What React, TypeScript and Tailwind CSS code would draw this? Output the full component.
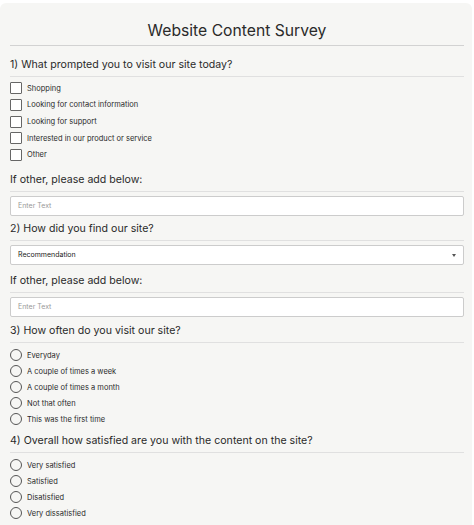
import React from 'react'

const font = {fontFamily: 'Inter, "Noto Sans", sans-serif'}

const Checkbox = ({label}: {label: string}) => (
    <div className="flex items-center h-[16.7px] gap-[5px]">
        <div className="w-[12px] h-[12px] border border-[#666] rounded-[1px] bg-white"></div>
        <span className="text-[7.5px] text-[#2a2a2a]">{label}</span>
    </div>
)

const Radio = ({label}: {label: string}) => (
    <div className="flex items-center h-[16px] gap-[5px]">
        <div className="w-[12px] h-[12px] border border-[#555] rounded-full"></div>
        <span className="text-[7.5px] text-[#2a2a2a]">{label}</span>
    </div>
)

const Heading = ({children, tight}: {children: React.ReactNode, tight?: boolean}) => (
    <div className={tight ? 'border-b border-[#e0e0e0] pb-[3px] mb-[3px]' : 'border-b border-[#e0e0e0] pb-[3px] mb-[4px]'}>
        <h2 className="text-[10.6px] leading-[16px] text-[#2a2a2a]">{children}</h2>
    </div>
)

const TextInput = () => (
    <div className="h-[20px] bg-white border border-[#ccc] rounded-[2px] flex items-center px-[7px]">
        <span className="text-[7px] text-[#999]">Enter Text</span>
    </div>
)

export default function App(): React.JSX.Element {
    return (
        <main className="w-[474px] h-[525px] bg-white pt-[3px] overflow-hidden" style={font}>
            <div className="w-[472px] h-[530px] bg-[#f6f6f4] rounded-[6px] pl-[10px] pr-[8px] pt-[17px]">
                <div className="border-b border-[#d2d2d2] pb-[3px]">
                    <h1 className="text-center text-[15.7px] leading-[22px] text-[#2a2a2a]">Website Content Survey</h1>
                </div>

                <div className="mt-[11px]">
                    <Heading tight>1) What prompted you to visit our site today?</Heading>
                    <Checkbox label="Shopping"/>
                    <Checkbox label="Looking for contact information"/>
                    <Checkbox label="Looking for support"/>
                    <Checkbox label="Interested in our product or service"/>
                    <Checkbox label="Other"/>
                </div>

                <div className="mt-[9px]">
                    <Heading>If other, please add below:</Heading>
                    <TextInput/>
                </div>

                <div className="mt-[5px]">
                    <Heading>2) How did you find our site?</Heading>
                    <div className="h-[20px] bg-white border border-[#ccc] rounded-[2px] flex items-center justify-between px-[7px] mt-[3px]">
                        <span className="text-[7px] text-[#222]">Recommendation</span>
                        <span className="w-0 h-0 border-l-[2.5px] border-r-[2.5px] border-t-[3px] border-l-transparent border-r-transparent border-t-[#555]"></span>
                    </div>
                </div>

                <div className="mt-[8px]">
                    <Heading>If other, please add below:</Heading>
                    <TextInput/>
                </div>

                <div className="mt-[6px]">
                    <Heading>3) How often do you visit our site?</Heading>
                    <Radio label="Everyday"/>
                    <Radio label="A couple of times a week"/>
                    <Radio label="A couple of times a month"/>
                    <Radio label="Not that often"/>
                    <Radio label="This was the first time"/>
                </div>

                <div className="mt-[6px]">
                    <Heading>4) Overall how satisfied are you with the content on the site?</Heading>
                    <Radio label="Very satisfied"/>
                    <Radio label="Satisfied"/>
                    <Radio label="Disatisfied"/>
                    <Radio label="Very dissatisfied"/>
                </div>
            </div>
        </main>
    )
}
